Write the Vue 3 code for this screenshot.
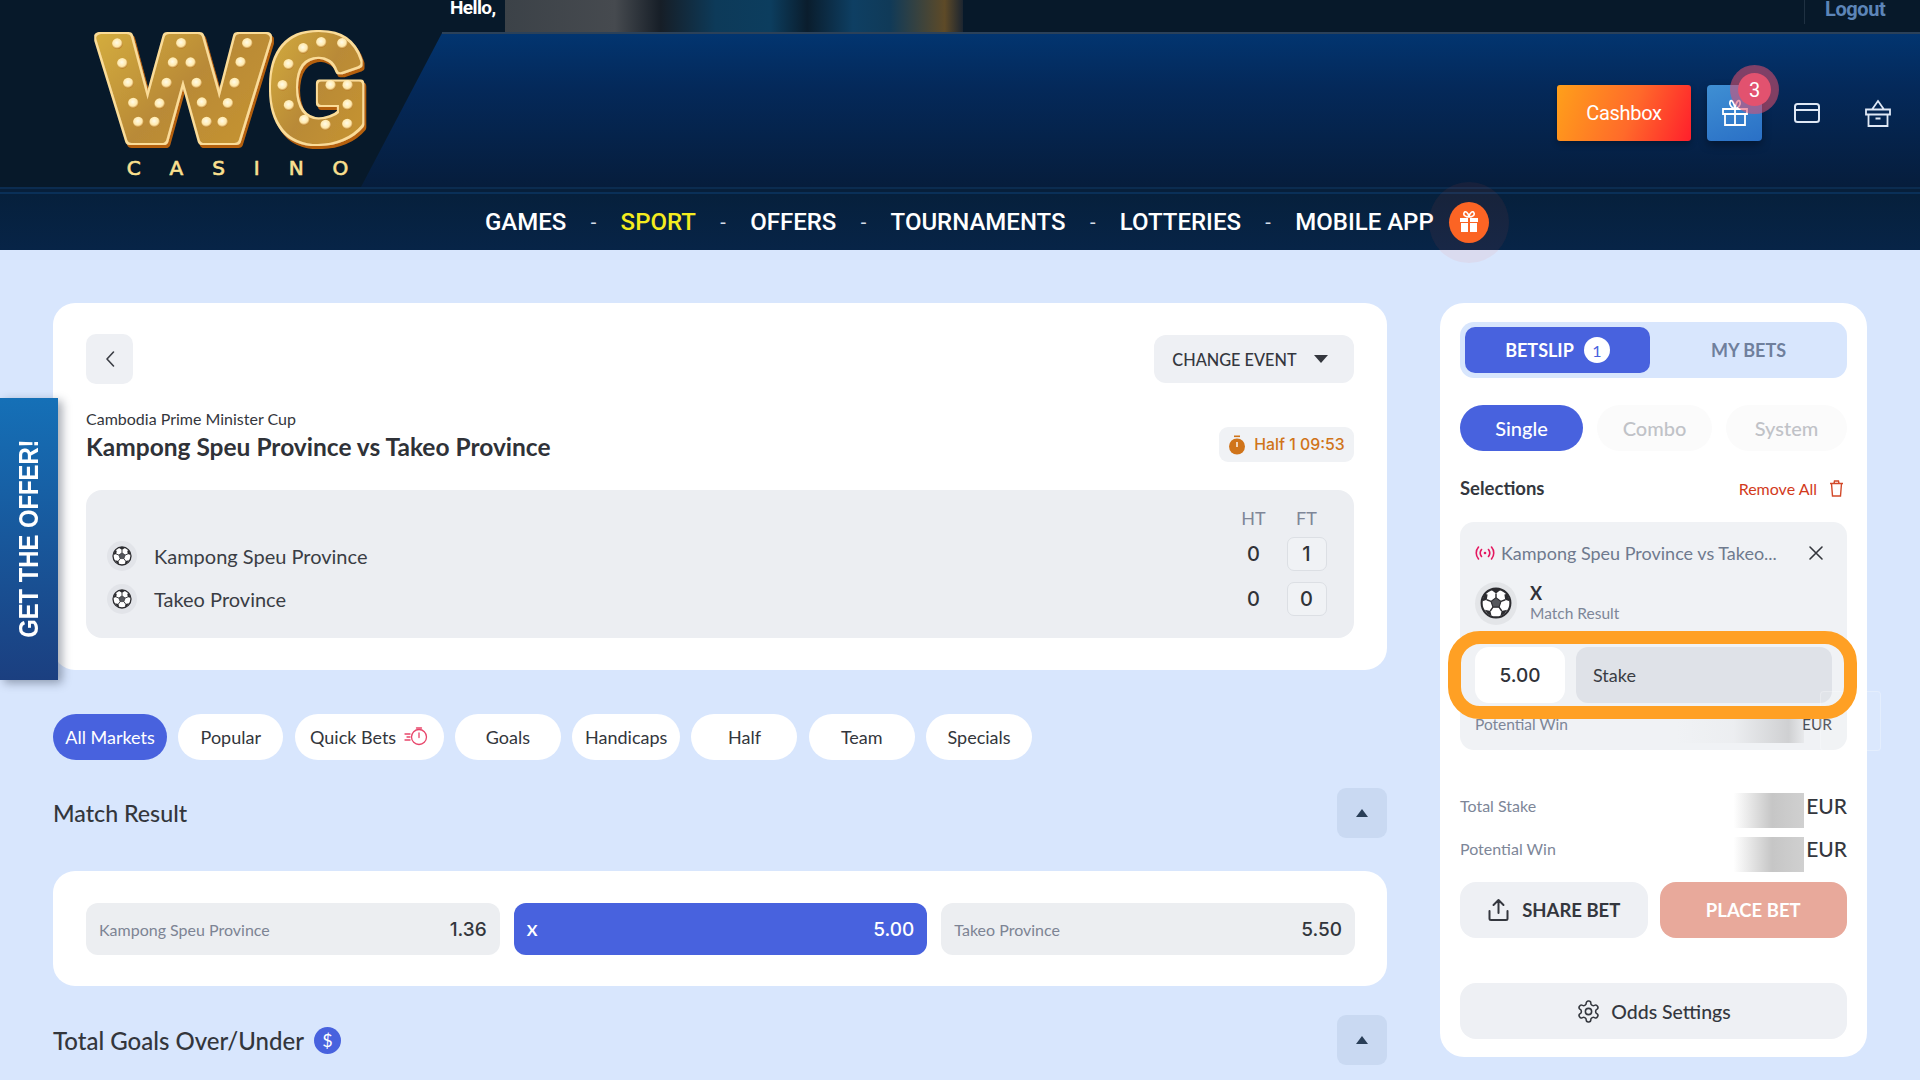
<script setup>
const navItems = ['GAMES', 'SPORT', 'OFFERS', 'TOURNAMENTS', 'LOTTERIES', 'MOBILE APP']
const tabs = [
  { label: 'All Markets', width: 114, active: true },
  { label: 'Popular', width: 105 },
  { label: 'Quick Bets', width: 149, quick: true },
  { label: 'Goals', width: 106 },
  { label: 'Handicaps', width: 108 },
  { label: 'Half', width: 106 },
  { label: 'Team', width: 106 },
  { label: 'Specials', width: 106 },
]
const odds = [
  { label: 'Kampong Speu Province', value: '1.36' },
  { label: 'X', value: '5.00', selected: true },
  { label: 'Takeo Province', value: '5.50' },
]
const scores = [
  { team: 'Kampong Speu Province', ht: 0, ft: 1 },
  { team: 'Takeo Province', ht: 0, ft: 0 },
]
const bulbs = [
  [112, 101], [127, 160], [145, 219], [160, 279], [175, 336], [224, 336], [239, 281], [260, 219], [279, 158],
  [304, 100], [332, 158], [350, 219], [366, 278], [380, 336], [428, 336], [444, 280], [464, 219], [482, 157], [502, 100],
  [670, 115], [724, 97], [787, 100], [626, 163], [608, 226], [627, 286], [673, 330], [737, 345], [802, 342],
  [752, 226], [803, 226], [803, 284],
]
</script>

<template>
  <div class="page">
    <svg class="defs" aria-hidden="true">
      <symbol id="ball" viewBox="0 0 40 40">
        <circle cx="20" cy="20" r="18" fill="#fff" stroke="#2c2c30" stroke-width="2.6" />
        <path d="M20 13.5l6.2 4.5-2.4 7.2h-7.6L13.800 18z" fill="#55575c" stroke="#2c2c30" stroke-width="1.4" />
        <path d="M20 13.500V8M26.200 18l5.500-2M23.800 25.200l3.400 4.800M16.200 25.200l-3.400 4.800M13.800 18l-5.500-2" stroke="#2c2c30" stroke-width="1.8" fill="none" />
        <path d="M14 3.500l6 4.500 6-4.500-1-1.500H15zM31.500 16l4.500 1.500 1-1-3-8-3.500 1zM8.500 16L4 17.500l-1-1 3-8 3.500 1zM27 30l-1.500 6.500 5-3 3.500-5zM13 30l1.500 6.500-5-3L6 28.500z" fill="#2c2c30" />
      </symbol>
    </svg>

    <header class="header">
      <div class="header-blue"></div>
      <div class="topbar">
        <span class="hello">Hello,</span>
        <div class="blurred-user"></div>
        <span class="logout">Logout</span>
      </div>

      <svg class="logo" viewBox="0 0 960 540" role="img" aria-label="WG Casino">
        <defs>
          <linearGradient id="gold" x1="0" y1="0" x2="1" y2="1">
            <stop offset="0" stop-color="#d8b23f" />
            <stop offset="0.5" stop-color="#b98a37" />
            <stop offset="1" stop-color="#c9962f" />
          </linearGradient>
          <radialGradient id="bulb" cx="0.45" cy="0.4" r="0.6">
            <stop offset="0" stop-color="#fffbe8" />
            <stop offset="0.65" stop-color="#ffe9ad" />
            <stop offset="1" stop-color="#b67a25" />
          </radialGradient>
          <filter id="bevel" x="-15%" y="-15%" width="130%" height="130%">
            <feMorphology in="SourceAlpha" operator="dilate" radius="7" result="fat" />
            <feFlood flood-color="#fbdc97" />
            <feComposite in2="fat" operator="in" result="ring" />
            <feOffset in="fat" dx="7" dy="9" result="off" />
            <feFlood flood-color="#b5600f" />
            <feComposite in2="off" operator="in" result="shade" />
            <feMerge>
              <feMergeNode in="shade" />
              <feMergeNode in="ring" />
              <feMergeNode in="SourceGraphic" />
            </feMerge>
          </filter>
        </defs>
        <g class="logo-letters" filter="url(#bevel)">
          <text x="62" y="386" textLength="494" lengthAdjust="spacingAndGlyphs">W</text>
          <text x="568" y="386" textLength="292" lengthAdjust="spacingAndGlyphs">G</text>
        </g>
        <circle v-for="(b, i) in bulbs" :key="i" :cx="b[0]" :cy="b[1]" r="16" fill="url(#bulb)" />
        <text class="logo-casino" x="140" y="494" textLength="665">CASINO</text>
      </svg>

      <div class="header-actions">
        <button class="cashbox">Cashbox</button>
        <button class="gift-btn">
          <svg width="30" height="30" viewBox="0 0 30 30" fill="none" stroke="#fff" stroke-width="1.800">
            <path d="M3 11h24v5H3zM5 16h20v11H5zM15 11v16M15 11c-3-1-6-4-5-7s4-1 5 7c1-8 4-10 5-7s-2 6-5 7z" />
          </svg>
          <span class="badge">3</span>
        </button>
        <svg class="tool-icon card-icon" width="26" height="20" viewBox="0 0 26 20" fill="none" stroke="#dfe8f5" stroke-width="2">
          <rect x="1" y="1" width="24" height="18" rx="2.500" />
          <path d="M1 7h24" />
        </svg>
        <svg class="tool-icon" width="26" height="28" viewBox="0 0 26 28" fill="none" stroke="#dfe8f5" stroke-width="1.800">
          <path d="M1 10.500h24v5H1zM3.500 15.500h19V27h-19zM7 10.500L13 2l6 8.500M10.500 19.500h5" />
        </svg>
      </div>

      <div class="nav-rule"></div>

      <nav class="nav">
        <template v-for="(item, i) in navItems" :key="item">
          <span v-if="i" class="nav-dash">-</span>
          <span class="nav-item" :class="{ 'nav-item--active': item === 'SPORT' }">{{ item }}</span>
        </template>
        <span class="nav-gift">
          <svg width="20" height="22" viewBox="0 0 20 22" fill="#fff">
            <path d="M1 7h8v4H1zM11 7h8v4h-8zM2 12h7v9H2zM11 12h7v9h-7z" />
            <path d="M10 6C7 6 4 4.500 5 2s4-1 5 4c1-5 4-6.500 5-4s-2 4-5 4z" fill="none" stroke="#fff" stroke-width="1.600" />
          </svg>
        </span>
      </nav>
    </header>

    <aside class="offer"><span>GET THE OFFER!</span></aside>

    <main class="main">
      <section class="left">
        <div class="card event-card">
          <div class="event-top">
            <button class="back-btn">
              <svg width="12" height="20" viewBox="0 0 12 20" fill="none" stroke="#3a3d44" stroke-width="1.600" stroke-linecap="round" stroke-linejoin="round">
                <path d="M9.500 3L3 10l6.500 7" />
              </svg>
            </button>
            <button class="change-btn">
              CHANGE EVENT
              <span class="caret-down"></span>
            </button>
          </div>

          <div class="event-title-row">
            <div>
              <div class="league">Cambodia Prime Minister Cup</div>
              <h1 class="title">Kampong Speu Province vs Takeo Province</h1>
            </div>
            <div class="live-time">
              <svg width="18" height="20" viewBox="0 0 18 20" fill="#d0741a">
                <circle cx="9" cy="11.500" r="8" />
                <rect x="6" y="0.500" width="6" height="1.600" />
                <rect x="8.300" y="7" width="1.400" height="5" fill="#fff" />
              </svg>
              Half 1 09:53
            </div>
          </div>

          <div class="score-box">
            <div class="score-head">
              <span>HT</span>
              <span>FT</span>
            </div>
            <div v-for="s in scores" :key="s.team" class="score-row">
              <div class="team">
                <span class="team-icon"><svg width="20" height="20"><use href="#ball" /></svg></span>
                {{ s.team }}
              </div>
              <span class="score-ht">{{ s.ht }}</span>
              <span class="score-ft">{{ s.ft }}</span>
            </div>
          </div>
        </div>

        <div class="tabs">
          <button
            v-for="t in tabs"
            :key="t.label"
            class="tab"
            :class="{ 'tab--active': t.active }"
            :style="{ width: t.width + 'px' }"
          >
            {{ t.label }}
            <svg v-if="t.quick" width="24" height="20" viewBox="0 0 24 20" fill="none" stroke="#e8456a" stroke-width="1.300">
              <circle cx="15" cy="10" r="7.500" />
              <path d="M15 6v4.500M12.500 1h5M1 7h5M3 10h3M1 13h5" stroke-linecap="round" />
            </svg>
          </button>
        </div>

        <div class="market-head">
          <h2>Match Result</h2>
          <button class="collapse"><span class="caret-up"></span></button>
        </div>

        <div class="card market-card">
          <div v-for="o in odds" :key="o.label" class="odd" :class="{ 'odd--selected': o.selected }">
            <span class="odd-label">{{ o.label }}</span>
            <span class="odd-value">{{ o.value }}</span>
          </div>
        </div>

        <div class="market-head market-head--second">
          <h2>Total Goals Over/Under</h2>
          <span class="dollar">$</span>
          <button class="collapse"><span class="caret-up"></span></button>
        </div>
      </section>

      <aside class="side">
        <div class="slip-tabs">
          <div class="slip-tab slip-tab--active">BETSLIP <span class="slip-count">1</span></div>
          <div class="slip-tab slip-tab--other">MY BETS</div>
        </div>

        <div class="bet-types">
          <button class="bet-type bet-type--active">Single</button>
          <button class="bet-type bet-type--combo">Combo</button>
          <button class="bet-type">System</button>
        </div>

        <div class="sel-head">
          <span class="sel-title">Selections</span>
          <span class="remove-all">
            Remove All
            <svg width="15" height="17" viewBox="0 0 15 17" fill="none" stroke="#d2492a" stroke-width="1.400">
              <path d="M1 3.500h13M2.500 3.500l1 12.500h8l1-12.500M5 3.500L5.500 1h4l.5 2.500" />
            </svg>
          </span>
        </div>

        <div class="sel-card">
          <div class="sel-event">
            <svg width="20" height="14" viewBox="0 0 20 14" fill="none" stroke="#e4175f" stroke-width="1.600" stroke-linecap="round">
              <circle cx="10" cy="7" r="1.300" fill="#e4175f" stroke="none" />
              <path d="M6.500 3.500c-1.500 2-1.500 5 0 7M13.500 3.500c1.500 2 1.500 5 0 7M3.500 1c-3 3.500-3 8.500 0 12M16.500 1c3 3.500 3 8.500 0 12" />
            </svg>
            <span class="sel-event-name">Kampong Speu Province vs Takeo...</span>
            <svg class="sel-close" width="16" height="16" viewBox="0 0 16 16" stroke="#33363c" stroke-width="1.600" stroke-linecap="round">
              <path d="M2 2l12 12M14 2L2 14" />
            </svg>
          </div>
          <div class="sel-pick">
            <span class="sel-ball"><svg width="32" height="32"><use href="#ball" /></svg></span>
            <div>
              <div class="sel-outcome">X</div>
              <div class="sel-market">Match Result</div>
            </div>
          </div>
          <div class="stake-row">
            <div class="stake-value">5.00</div>
            <div class="stake-label">Stake</div>
            <div class="stake-ring"></div>
          </div>
          <div class="sel-win">
            <span>Potential Win</span>
            <div class="smudge smudge--win"></div>
            <span class="sel-win-cur">EUR</span>
          </div>
        </div>

        <div class="total-row total-row--first">
          <span>Total Stake</span>
          <div class="smudge"></div>
          <b>EUR</b>
        </div>
        <div class="total-row">
          <span>Potential Win</span>
          <div class="smudge"></div>
          <b>EUR</b>
        </div>

        <div class="bet-actions">
          <button class="share-btn">
            <svg width="23" height="24" viewBox="0 0 22 24" fill="none" stroke="#34373e" stroke-width="2" stroke-linecap="round" stroke-linejoin="round">
              <path d="M11 15V2M6 7l5-5 5 5M2 13v7.500c0 1 .8 1.500 1.500 1.500h15c.7 0 1.500-.5 1.500-1.500V13" />
            </svg>
            SHARE BET
          </button>
          <button class="place-btn">PLACE BET</button>
        </div>

        <button class="odds-settings">
          <svg width="25" height="25" viewBox="0 0 24 24" fill="none" stroke="#34373e" stroke-width="1.500" stroke-linejoin="round">
            <path d="M12.220 2h-.44a2 2 0 0 0-2 2v.18a2 2 0 0 1-1 1.730l-.43.250a2 2 0 0 1-2 0l-.15-.08a2 2 0 0 0-2.730.730l-.22.380a2 2 0 0 0 .73 2.730l.15.100a2 2 0 0 1 1 1.720v.510a2 2 0 0 1-1 1.740l-.15.090a2 2 0 0 0-.73 2.730l.22.380a2 2 0 0 0 2.730.730l.15-.08a2 2 0 0 1 2 0l.43.250a2 2 0 0 1 1 1.730V20a2 2 0 0 0 2 2h.44a2 2 0 0 0 2-2v-.18a2 2 0 0 1 1-1.730l.43-.250a2 2 0 0 1 2 0l.15.080a2 2 0 0 0 2.730-.730l.22-.390a2 2 0 0 0-.73-2.730l-.15-.080a2 2 0 0 1-1-1.740v-.500a2 2 0 0 1 1-1.740l.15-.090a2 2 0 0 0 .73-2.730l-.22-.380a2 2 0 0 0-2.730-.730l-.15.080a2 2 0 0 1-2 0l-.43-.250a2 2 0 0 1-1-1.730V4a2 2 0 0 0-2-2z" />
            <circle cx="12" cy="12" r="3" />
          </svg>
          Odds Settings
        </button>
      </aside>
    </main>
    <div class="ghost-panel"></div>
  </div>
</template>

<style>
html, body {
  margin: 0;
  background: #d8e6fd;
}
</style>

<style scoped>
.page {
  position: relative;
  width: 1920px;
  height: 1080px;
  overflow: hidden;
  background: #d8e6fd;
  font-family: Lato, "Open Sans", sans-serif;
  color: #303238;
}
.defs {
  position: absolute;
  width: 0;
  height: 0;
}
button {
  border: 0;
  font-family: inherit;
  padding: 0;
}
h1, h2 {
  margin: 0;
}

/* header */
.header {
  position: relative;
  height: 250px;
  background: #07192a;
  font-family: Roboto, sans-serif;
}
.header-blue {
  position: absolute;
  inset: 33px 0 63px 0;
  background: linear-gradient(180deg, #023570 0%, #04295a 35%, #061d3c 100%);
  clip-path: polygon(442px 0, 100% 0, 100% 100%, 361px 100%);
}
.topbar {
  position: relative;
  display: flex;
  height: 34px;
  padding-left: 450px;
  overflow: hidden;
}
.topbar::after {
  content: "";
  position: absolute;
  left: 442px;
  right: 0;
  bottom: 0;
  height: 2px;
  background: #2b4159;
}
.hello {
  color: #fff;
  font-size: 19px;
  font-weight: 700;
  line-height: 16px;
  letter-spacing: -0.6px;
}
.blurred-user {
  width: 458px;
  height: 34px;
  margin-left: 9px;
  background: linear-gradient(90deg, #3c4248 0%, #464a4f 24%, #161e27 34%, #0d3a59 46%, #0c3d5e 58%, #0a1d2d 66%, #0e3f63 76%, #103a58 84%, #5e4a27 96%, #1c2530 100%);
}
.logout {
  position: absolute;
  left: 1825px;
  top: 0;
  color: #5c85b8;
  font-size: 20px;
  font-weight: 700;
  line-height: 19px;
  letter-spacing: -0.4px;
}
.logout::before {
  content: "";
  position: absolute;
  left: -21px;
  top: 0;
  width: 1px;
  height: 24px;
  background: #1f3142;
}
.logo {
  position: absolute;
  left: 80px;
  top: 10px;
  width: 320px;
  height: 180px;
}
.logo-letters text {
  font-family: "Liberation Sans", Arial, sans-serif;
  font-size: 440px;
  font-weight: 700;
  fill: url(#gold);
  stroke: url(#gold);
  stroke-width: 24px;
  stroke-linejoin: round;
}
.logo-casino {
  font-family: "DejaVu Sans", sans-serif;
  font-size: 60px;
  fill: #fbe08f;
  stroke: #fbe08f;
  stroke-width: 2px;
}
.header-actions {
  position: absolute;
  left: 1557px;
  top: 85px;
  display: flex;
  align-items: center;
  height: 56px;
}
.cashbox {
  width: 134px;
  height: 56px;
  margin-right: 16px;
  border-radius: 3px;
  background: linear-gradient(110deg, #ffa01a 0%, #ff6a2a 55%, #ff1f2c 100%);
  color: #fff;
  font-size: 20px;
  letter-spacing: -0.3px;
  box-shadow: 0 3px 6px rgba(0, 0, 0, 0.3);
}
.gift-btn {
  position: relative;
  display: flex;
  align-items: center;
  justify-content: center;
  width: 55px;
  height: 56px;
  margin-right: 32px;
  border-radius: 4px;
  background: linear-gradient(160deg, #3f8fd3, #2a70c6);
  box-shadow: 0 4px 8px rgba(0, 0, 0, 0.35);
}
.badge {
  position: absolute;
  right: -9px;
  top: -12px;
  display: flex;
  align-items: center;
  justify-content: center;
  width: 33px;
  height: 33px;
  border-radius: 50%;
  background: #e2526f;
  color: #fff;
  font-size: 20px;
  box-shadow: 0 0 0 7px rgba(226, 80, 111, 0.03), 0 0 0 8px rgba(226, 80, 111, 0.55);
}
.card-icon {
  margin-right: 45px;
}
.nav-rule {
  position: absolute;
  left: 0;
  right: 0;
  top: 187px;
  height: 7px;
  background: linear-gradient(180deg, #0b2c50 0 30%, #071f3a 30% 70%, #0a3058 70%);
}
.nav {
  position: absolute;
  left: 485px;
  right: 0;
  top: 194px;
  height: 56px;
  display: flex;
  align-items: center;
}
.header::before {
  content: "";
  position: absolute;
  left: 0;
  right: 0;
  top: 194px;
  height: 56px;
  background: linear-gradient(180deg, #06203c 0%, #072447 100%);
}
.nav-item {
  color: #fff;
  font-size: 24px;
  font-weight: 500;
}
.nav-item--active {
  color: #f5ec1f;
}
.nav-dash {
  width: 54.250px;
  text-align: center;
  color: #d5dde8;
  font-size: 20px;
}
.nav-gift {
  position: relative;
  z-index: 2;
  display: flex;
  align-items: center;
  justify-content: center;
  width: 40px;
  height: 41px;
  margin-left: 15px;
  border-radius: 50%;
  background: #fb6424;
  box-shadow: 0 0 0 20px rgba(255, 90, 60, 0.07);
}

/* offer tab */
.offer {
  position: absolute;
  z-index: 3;
  left: 0;
  top: 398px;
  width: 58px;
  height: 282px;
  display: flex;
  align-items: center;
  justify-content: center;
  background: linear-gradient(180deg, #1570b7 0%, #1b3f80 100%);
  box-shadow: 4px 3px 9px rgba(30, 40, 60, 0.4);
}
.offer span {
  writing-mode: vertical-rl;
  transform: rotate(180deg) scaleY(0.85);
  color: #fff;
  font-family: "Liberation Sans", Arial, sans-serif;
  font-size: 28px;
  font-weight: 700;
  white-space: nowrap;
}

/* layout */
.main {
  display: flex;
  gap: 53px;
  padding: 53px 0 0 53px;
}
.left {
  width: 1334px;
}
.card {
  background: #fff;
  border-radius: 22px;
}
.event-card {
  box-sizing: border-box;
  height: 367px;
  padding: 31px 33px 0;
}
.event-top {
  display: flex;
  align-items: center;
  justify-content: space-between;
  height: 50px;
}
.back-btn {
  display: flex;
  align-items: center;
  justify-content: center;
  width: 47px;
  height: 50px;
  border-radius: 10px;
  background: #eef0f4;
}
.change-btn {
  display: flex;
  align-items: center;
  justify-content: center;
  gap: 17px;
  box-sizing: border-box;
  width: 200px;
  height: 48px;
  padding-right: 8px;
  border-radius: 12px;
  background: #eef0f4;
  color: #34373e;
  font-size: 16.300px;
  font-weight: 500;
}
.caret-down {
  border-left: 7px solid transparent;
  border-right: 7px solid transparent;
  border-top: 8px solid #34373e;
}
.event-title-row {
  display: flex;
  align-items: flex-end;
  justify-content: space-between;
  margin-top: 25px;
}
.league {
  font-size: 16px;
  line-height: 20px;
  color: #33363c;
}
.title {
  margin-top: 3px;
  font-size: 24.500px;
  font-weight: 700;
  line-height: 30px;
  color: #2f3238;
}
.live-time {
  display: flex;
  align-items: center;
  justify-content: center;
  gap: 8px;
  width: 135px;
  height: 35px;
  border-radius: 9px;
  background: #f0f2f5;
  color: #d0741a;
  font-family: Inter, sans-serif;
  font-size: 15.800px;
  font-weight: 500;
}
.score-box {
  box-sizing: border-box;
  height: 148px;
  margin-top: 28px;
  padding: 17px 21px 0;
  border-radius: 16px;
  background: #eceef2;
}
.score-head {
  display: flex;
  justify-content: flex-end;
  height: 30px;
  color: #7f8698;
  font-size: 18px;
}
.score-head span {
  width: 53px;
  text-align: center;
}
.score-row {
  display: flex;
  align-items: center;
  height: 34px;
  margin-bottom: 11px;
}
.score-row:nth-child(2) .team {
  padding-top: 4px;
}
.team {
  flex: 1;
  display: flex;
  align-items: center;
  gap: 17px;
  font-size: 20px;
  color: #3a3d44;
}
.team-icon {
  display: flex;
  align-items: center;
  justify-content: center;
  width: 30px;
  height: 30px;
  border-radius: 50%;
  background: #e2e4e9;
}
.score-ht, .score-ft {
  width: 53px;
  font-family: Inter, sans-serif;
  font-size: 20px;
  font-weight: 500;
  text-align: center;
}
.score-ft {
  box-sizing: border-box;
  width: 40px;
  height: 34px;
  margin: 0 6.500px;
  line-height: 32px;
  border: 1px solid #dcdfe4;
  border-radius: 7px;
  background: #f0f2f5;
}

/* tabs */
.tabs {
  display: flex;
  gap: 11.300px;
  margin-top: 44px;
}
.tab {
  display: flex;
  align-items: center;
  justify-content: center;
  gap: 8px;
  height: 46px;
  border-radius: 23px;
  background: #fff;
  color: #33363c;
  font-size: 18px;
  white-space: nowrap;
}
.tab--active {
  background: #4862de;
  color: #fff;
}
.market-head {
  display: flex;
  align-items: center;
  gap: 10px;
  height: 50px;
  margin-top: 28px;
}
.market-head h2 {
  font-size: 23.200px;
  font-weight: 500;
  color: #33363c;
}
.market-head--second {
  margin-top: 29px;
}
.market-head--second h2 {
  font-size: 24px;
}
.collapse {
  display: flex;
  align-items: center;
  justify-content: center;
  width: 50px;
  height: 50px;
  margin-left: auto;
  border-radius: 9px;
  background: #c9d9f2;
}
.caret-up {
  border-left: 6px solid transparent;
  border-right: 6px solid transparent;
  border-bottom: 8px solid #2a3f58;
}
.dollar {
  display: flex;
  align-items: center;
  justify-content: center;
  width: 27px;
  height: 27px;
  border-radius: 50%;
  background: #4862de;
  color: #fff;
  font-size: 18px;
}
.market-card {
  box-sizing: border-box;
  display: flex;
  gap: 14px;
  height: 115px;
  margin-top: 33px;
  padding: 32px 32px 0 33px;
}
.odd {
  flex: 1;
  display: flex;
  align-items: center;
  justify-content: space-between;
  box-sizing: border-box;
  height: 52px;
  padding: 0 13px;
  border-radius: 12px;
  background: #eceef1;
}
.odd-label {
  color: #7d8494;
  font-size: 16px;
}
.odd-value {
  color: #33363c;
  font-family: Inter, sans-serif;
  font-size: 19px;
  font-weight: 500;
}
.odd--selected {
  background: #4862de;
}
.odd--selected .odd-label,
.odd--selected .odd-value {
  color: #fff;
}
.odd--selected .odd-label {
  font-weight: 700;
}

/* betslip */
.side {
  box-sizing: border-box;
  width: 427px;
  height: 754px;
  padding: 19px 20px 0;
  border-radius: 24px;
  background: #fff;
}
.slip-tabs {
  display: flex;
  box-sizing: border-box;
  height: 56px;
  padding: 5px;
  border-radius: 14px;
  background: #d8e6fd;
}
.slip-tab {
  flex: 1;
  display: flex;
  align-items: center;
  justify-content: center;
  gap: 10px;
  border-radius: 10px;
  color: #6f7f9c;
  font-size: 18px;
  font-weight: 700;
}
.slip-tab--other {
  padding-left: 5px;
}
.slip-tab--active {
  flex: 0 0 185px;
  background: #4862de;
  color: #fff;
}
.slip-count {
  display: flex;
  align-items: center;
  justify-content: center;
  width: 26px;
  height: 26px;
  border-radius: 50%;
  background: #fff;
  color: #4862de;
  font-size: 16px;
  font-weight: 400;
}
.bet-types {
  display: flex;
  gap: 14px;
  margin-top: 27px;
}
.bet-type {
  flex: 1;
  height: 46px;
  border-radius: 23px;
  background: #fbfbfb;
  color: #c0c2c7;
  font-size: 20px;
  font-weight: 500;
}
.bet-type--active {
  flex: 0 0 123px;
  background: #4862de;
  color: #fff;
}
.bet-type--combo {
  flex: 0 0 115px;
}
.sel-head {
  display: flex;
  align-items: center;
  justify-content: space-between;
  height: 24px;
  margin-top: 25px;
}
.sel-title {
  font-size: 18.500px;
  font-weight: 700;
  color: #34373e;
}
.remove-all {
  display: flex;
  align-items: center;
  gap: 12px;
  padding-right: 3px;
  color: #d23a1c;
  font-size: 16px;
}
.sel-card {
  box-sizing: border-box;
  height: 228px;
  margin-top: 22px;
  padding: 21px 15px 0;
  border-radius: 14px;
  background: #f0f2f5;
}
.sel-event {
  display: flex;
  align-items: center;
  gap: 6px;
  height: 20px;
  color: #6f7a8e;
  font-size: 18px;
}
.sel-event-name {
  flex: 1;
  white-space: nowrap;
}
.sel-close {
  margin-right: 8px;
}
.sel-pick {
  display: flex;
  align-items: center;
  gap: 13px;
  height: 44px;
  margin-top: 18px;
}
.sel-ball {
  display: flex;
  align-items: center;
  justify-content: center;
  width: 42px;
  height: 43px;
  border-radius: 50%;
  background: #e3e5e8;
}
.sel-outcome {
  font-size: 18px;
  font-weight: 700;
  line-height: 20px;
}
.sel-market {
  color: #7d8698;
  font-size: 15.500px;
  line-height: 20px;
}
.stake-row {
  position: relative;
  display: flex;
  gap: 11px;
  height: 56px;
  margin-top: 22px;
}
.stake-value {
  display: flex;
  align-items: center;
  justify-content: center;
  width: 90px;
  border-radius: 14px;
  background: #fff;
  font-family: Inter, sans-serif;
  font-size: 19px;
  font-weight: 500;
}
.stake-label {
  flex: 1;
  display: flex;
  align-items: center;
  padding-left: 17px;
  border-radius: 12px;
  background: #dfe2e8;
  color: #3a3d44;
  font-size: 18px;
}
.stake-ring {
  position: absolute;
  z-index: 2;
  inset: -16px -25px -16px -27px;
  border: 13px solid #ffa024;
  border-radius: 32px;
}
.sel-win {
  position: relative;
  display: flex;
  align-items: center;
  justify-content: space-between;
  height: 32px;
  margin-top: 5px;
  color: #7d8698;
  font-size: 15.500px;
}
.sel-win-cur {
  color: #4a4d54;
}
.smudge {
  position: absolute;
  left: 216px;
  width: 128px;
  height: 35px;
  background: linear-gradient(90deg, rgba(200, 200, 200, 0) 0%, rgba(200, 200, 200, 0) 45%, #c6c6c6 75%, #d0d0d0 100%);
}
.smudge--win {
  left: 201px;
  top: 0;
  background: linear-gradient(90deg, rgba(200, 200, 200, 0) 0%, rgba(200, 200, 200, 0.1) 45%, #cfd0d2 88%, rgba(200, 200, 200, 0.2) 100%);
}
.total-row {
  position: relative;
  display: flex;
  align-items: center;
  justify-content: space-between;
  box-sizing: border-box;
  height: 35px;
  margin-top: 9px;
  padding-bottom: 13px;
  color: #7d8698;
  font-size: 16px;
}
.total-row--first {
  margin-top: 43px;
  padding-bottom: 10px;
}
.total-row .smudge {
  top: 0;
}
.total-row b {
  color: #34373e;
  font-size: 21px;
  font-weight: 500;
}
.bet-actions {
  display: flex;
  gap: 12px;
  margin-top: 10px;
}
.share-btn, .place-btn {
  flex: 1;
  display: flex;
  align-items: center;
  justify-content: center;
  gap: 12px;
  height: 56px;
  border-radius: 16px;
  font-size: 18.500px;
  font-weight: 700;
}
.share-btn {
  background: #eef0f4;
  color: #34373e;
}
.place-btn {
  background: #e8a99b;
  color: #fff;
}
.odds-settings {
  display: flex;
  align-items: center;
  justify-content: center;
  gap: 10px;
  width: 100%;
  height: 56px;
  margin-top: 45px;
  border-radius: 16px;
  background: #eef0f4;
  color: #34373e;
  font-size: 19.500px;
  font-weight: 500;
}
.ghost-panel {
  position: absolute;
  left: 1820px;
  top: 691px;
  width: 61px;
  height: 60px;
  border: 1px solid rgba(255, 255, 255, 0.25);
  border-radius: 4px;
  background: rgba(255, 255, 255, 0.08);
  box-sizing: border-box;
}
</style>
